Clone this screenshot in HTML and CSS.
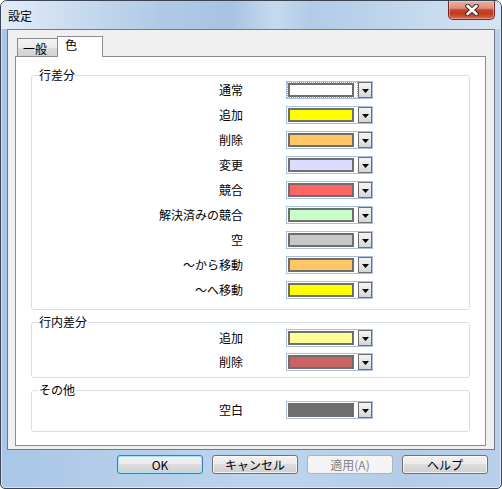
FILE: index.html
```html
<!DOCTYPE html>
<html lang="ja">
<head>
<meta charset="utf-8">
<title>設定</title>
<link rel="stylesheet" href="styles.css">
</head>
<body>
<div class="window">
  <div class="titlebar">
    <span class="title">設定</span>
    <div class="close">
      <svg width="14" height="12" viewBox="0 0 14 12">
        <path d="M2.5 2 L11.5 10 M11.5 2 L2.5 10" stroke="#3b2a28" stroke-width="4.6" stroke-linecap="round" fill="none"/>
        <path d="M2.5 2 L11.5 10 M11.5 2 L2.5 10" stroke="#ffffff" stroke-width="2.6" stroke-linecap="round" fill="none"/>
      </svg>
    </div>
  </div>
  <div class="client">
    <div class="tabs">
      <div class="tab">一般</div>
      <div class="tab active">色</div>
    </div>
    <div class="panel">
      <fieldset class="group g1">
        <legend>行差分</legend>
        <div class="rows">
          <div class="row"><span class="label">通常</span><div class="ctrl"><div class="swbox focus"><div class="swatch" style="background:#ffffff"></div></div><div class="drop"><svg width="7" height="4" viewBox="0 0 7 4"><path d="M0 0H7L3.5 4Z" fill="#000"/></svg></div></div></div>
          <div class="row"><span class="label">追加</span><div class="ctrl"><div class="swbox"><div class="swatch" style="background:#ffff00"></div></div><div class="drop"><svg width="7" height="4" viewBox="0 0 7 4"><path d="M0 0H7L3.5 4Z" fill="#000"/></svg></div></div></div>
          <div class="row"><span class="label">削除</span><div class="ctrl"><div class="swbox"><div class="swatch" style="background:#ffc864"></div></div><div class="drop"><svg width="7" height="4" viewBox="0 0 7 4"><path d="M0 0H7L3.5 4Z" fill="#000"/></svg></div></div></div>
          <div class="row"><span class="label">変更</span><div class="ctrl"><div class="swbox"><div class="swatch" style="background:#dcdcff"></div></div><div class="drop"><svg width="7" height="4" viewBox="0 0 7 4"><path d="M0 0H7L3.5 4Z" fill="#000"/></svg></div></div></div>
          <div class="row"><span class="label">競合</span><div class="ctrl"><div class="swbox"><div class="swatch" style="background:#ff6464"></div></div><div class="drop"><svg width="7" height="4" viewBox="0 0 7 4"><path d="M0 0H7L3.5 4Z" fill="#000"/></svg></div></div></div>
          <div class="row"><span class="label">解決済みの競合</span><div class="ctrl"><div class="swbox"><div class="swatch" style="background:#c8ffc8"></div></div><div class="drop"><svg width="7" height="4" viewBox="0 0 7 4"><path d="M0 0H7L3.5 4Z" fill="#000"/></svg></div></div></div>
          <div class="row"><span class="label">空</span><div class="ctrl"><div class="swbox"><div class="swatch" style="background:#c8c8c8"></div></div><div class="drop"><svg width="7" height="4" viewBox="0 0 7 4"><path d="M0 0H7L3.5 4Z" fill="#000"/></svg></div></div></div>
          <div class="row"><span class="label">～から移動</span><div class="ctrl"><div class="swbox"><div class="swatch" style="background:#ffc864"></div></div><div class="drop"><svg width="7" height="4" viewBox="0 0 7 4"><path d="M0 0H7L3.5 4Z" fill="#000"/></svg></div></div></div>
          <div class="row"><span class="label">～へ移動</span><div class="ctrl"><div class="swbox"><div class="swatch" style="background:#ffff00"></div></div><div class="drop"><svg width="7" height="4" viewBox="0 0 7 4"><path d="M0 0H7L3.5 4Z" fill="#000"/></svg></div></div></div>
        </div>
      </fieldset>
      <fieldset class="group g2">
        <legend>行内差分</legend>
        <div class="rows">
          <div class="row"><span class="label">追加</span><div class="ctrl"><div class="swbox"><div class="swatch" style="background:#ffff96"></div></div><div class="drop"><svg width="7" height="4" viewBox="0 0 7 4"><path d="M0 0H7L3.5 4Z" fill="#000"/></svg></div></div></div>
          <div class="row"><span class="label">削除</span><div class="ctrl"><div class="swbox"><div class="swatch" style="background:#c86464"></div></div><div class="drop"><svg width="7" height="4" viewBox="0 0 7 4"><path d="M0 0H7L3.5 4Z" fill="#000"/></svg></div></div></div>
        </div>
      </fieldset>
      <fieldset class="group g3">
        <legend>その他</legend>
        <div class="rows">
          <div class="row"><span class="label">空白</span><div class="ctrl"><div class="swbox"><div class="swatch" style="background:#6e6e6e"></div></div><div class="drop"><svg width="7" height="4" viewBox="0 0 7 4"><path d="M0 0H7L3.5 4Z" fill="#000"/></svg></div></div></div>
        </div>
      </fieldset>
    </div>
  </div>
  <div class="buttons">
    <button class="btn default">OK</button>
    <button class="btn">キャンセル</button>
    <button class="btn disabled">適用(A)</button>
    <button class="btn">ヘルプ</button>
  </div>
</div>
</body>
</html>
```
FILE: styles.css
```css
* { box-sizing: border-box; }
html, body { margin: 0; padding: 0; }
body {
  width: 502px;
  height: 489px;
  overflow: hidden;
  background: #ffffff;
  font-family: "Noto Sans CJK JP", "Noto Sans", sans-serif;
  font-size: 12px;
  color: #000;
}
.window {
  width: 502px;
  height: 489px;
  border: 1px solid #3a4452;
  border-radius: 7px 7px 5px 5px;
  overflow: hidden;
  display: flex;
  flex-direction: column;
  background: linear-gradient(90deg, #a9c6e6 0%, #b5cee9 25%, #bdd4ec 55%, #b5cce8 80%, #bad0e9 100%);
  box-shadow: inset 0 0 0 1px rgba(255,255,255,0.5);
}
.titlebar {
  height: 28px;
  flex: none;
  display: flex;
  align-items: flex-start;
  padding: 0 6px 0 7px;
  background: linear-gradient(90deg, #e2edf8 0%, #cadcf0 14%, #b0cae6 32%, #a8c3e2 46%, #c6daef 55%, #b2cbe7 62%, #bdd3ec 75%, #cbddf0 90%, #d6e5f4 100%);
}
.title {
  margin-top: 8px;
  line-height: 14px;
}
.close {
  margin-left: auto;
  width: 47px;
  height: 19px;
  border: 1px solid #6e2a20;
  border-top: none;
  border-radius: 0 0 5px 5px;
  background: linear-gradient(180deg, #e9b0a3 0%, #dc8e7c 40%, #c8452d 50%, #c13a22 70%, #d9694e 100%);
  box-shadow: inset 0 0 0 1px rgba(255,220,210,0.45);
  display: flex;
  align-items: center;
  justify-content: center;
}
.client {
  flex: none;
  margin: 0 6px;
  height: 421px;
  background: #f0f0f0;
  border: 1px solid #6f7b8a;
  padding: 6px 8px 3px 7px;
  display: flex;
  flex-direction: column;
}
.tabs {
  height: 20px;
  flex: none;
  display: flex;
  align-items: flex-end;
  padding-left: 2px;
  position: relative;
  z-index: 1;
}
.tab {
  width: 41px;
  height: 18px;
  border: 1px solid #898c95;
  border-bottom: none;
  background: linear-gradient(180deg, #f3f3f3 0%, #ebebeb 50%, #dddddd 51%, #d2d2d2 100%);
  padding: 3px 0 0 5px;
  line-height: 14px;
}
.tab.active {
  width: 46px;
  height: 21px;
  margin-left: -1px;
  margin-bottom: -1px;
  background: #ffffff;
  padding: 1px 0 0 7px;
}
.panel {
  flex: none;
  height: 390px;
  background: #ffffff;
  border: 1px solid #898c95;
  padding: 12px 15px 0 15px;
}
.group {
  margin: 0;
  border: 1px solid #d5dfe5;
  border-radius: 3px;
  padding: 0;
  min-width: 0;
}
.group legend {
  margin-left: 6px;
  padding: 0 1px;
  line-height: 12px;
}
.g1 { padding-bottom: 10px; }
.g2 { margin-top: 6px; padding-top: 1px; padding-bottom: 6px; }
.g3 { margin-top: 6px; padding-top: 5px; padding-bottom: 12px; }
.rows {
  display: flex;
  flex-direction: column;
  gap: 7px;
}
.g2 .rows { gap: 6px; }
.row {
  height: 18px;
  display: flex;
  align-items: center;
}
.label {
  width: 211px;
  text-align: right;
  line-height: 18px;
  white-space: nowrap;
}
.ctrl {
  margin-left: 43px;
  width: 87px;
  height: 18px;
  border: 1px solid #a8bfe0;
  display: flex;
  align-items: center;
}
.swbox {
  width: 71px;
  height: 16px;
  border: 1px dotted transparent;
  display: flex;
  align-items: center;
}
.swbox.focus { border-color: #cf9a88; }
.swatch {
  width: 66px;
  height: 14px;
  border: 2px solid #6e6e6e;
}
.drop {
  width: 14px;
  height: 16px;
  border: 1px solid #707070;
  background: linear-gradient(180deg, #f4f4f4 0%, #e6e6e6 50%, #d6d6d6 100%);
  display: flex;
  align-items: center;
  justify-content: center;
  padding-top: 1px;
}
.drop svg { display: block; }
.buttons {
  flex: none;
  display: flex;
  justify-content: flex-end;
  gap: 9px;
  padding: 5px 13px 0 0;
}
.btn {
  width: 86px;
  height: 19px;
  margin: 0;
  padding: 0;
  border: 1px solid #707070;
  border-radius: 3px;
  background: linear-gradient(180deg, #f2f2f2 0%, #ebebeb 48%, #dddddd 50%, #cfcfcf 100%);
  box-shadow: inset 0 0 0 1px rgba(255,255,255,0.7);
  font-family: "Noto Sans CJK JP", "Noto Sans", sans-serif;
  font-size: 12px;
  line-height: 16px;
  color: #000;
}
.btn.default {
  border-color: #3c7fb1;
  box-shadow: inset 0 0 0 1px #a6e2f8;
}
.btn.disabled {
  border-color: #adb2b5;
  background: #f4f4f4;
  box-shadow: none;
  color: #838383;
}
```
